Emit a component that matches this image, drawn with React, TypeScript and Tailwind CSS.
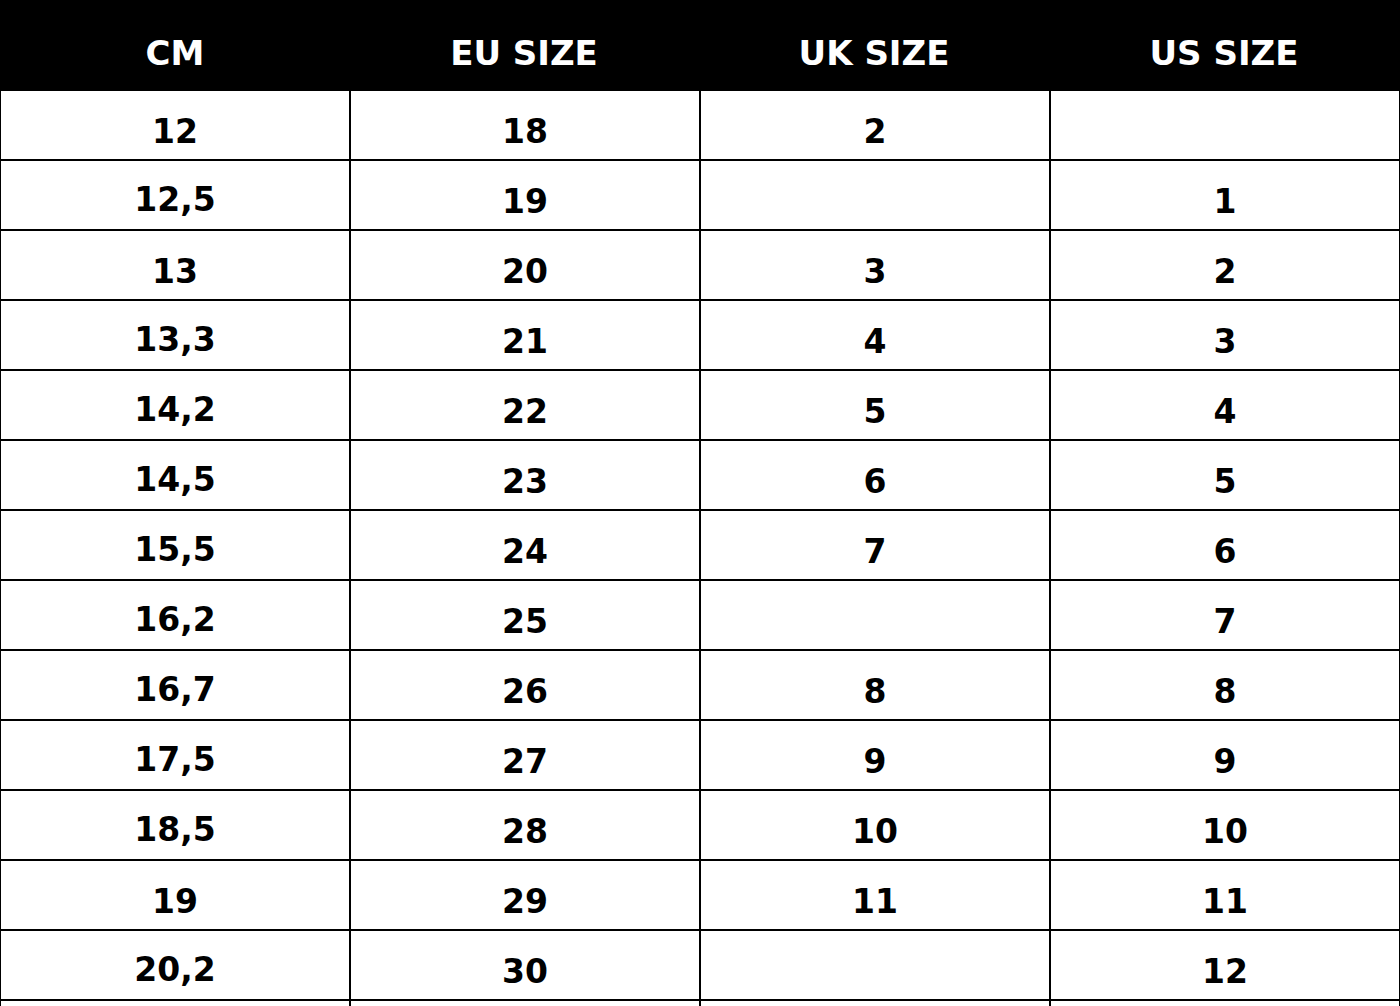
const headers = ["CM", "EU SIZE", "UK SIZE", "US SIZE"];

const rows: string[][] = [
    ["12", "18", "2", ""],
    ["12,5", "19", "", "1"],
    ["13", "20", "3", "2"],
    ["13,3", "21", "4", "3"],
    ["14,2", "22", "5", "4"],
    ["14,5", "23", "6", "5"],
    ["15,5", "24", "7", "6"],
    ["16,2", "25", "", "7"],
    ["16,7", "26", "8", "8"],
    ["17,5", "27", "9", "9"],
    ["18,5", "28", "10", "10"],
    ["19", "29", "11", "11"],
    ["20,2", "30", "", "12"],
    ["", "", "", ""],
];

const cols = "grid grid-cols-[348px_350px_350px_350px]";

const SizeChart = () => {
    return (
        <div className="w-[1400px] h-[1006px] overflow-hidden bg-white border-x border-black font-['DejaVu_Sans',sans-serif] font-bold text-[33px] leading-[38px] text-black">
            <div className={`${cols} h-[91px] bg-black text-white text-[34px]`}>
                {headers.map((h) => (
                    <div key={h} className="pt-[34px] text-center">
                        {h}
                    </div>
                ))}
            </div>
            {rows.map((row, i) => (
                <div key={i} className={`${cols} h-[70px] border-b-2 border-black`}>
                    {row.map((cell, j) => (
                        <div
                            key={j}
                            className={`text-center ${j > 0 ? "border-l-2 border-black" : ""} ${cell.includes(",") ? "pt-[20px]" : "pt-[22px]"}`}
                        >
                            {cell}
                        </div>
                    ))}
                </div>
            ))}
        </div>
    );
};

export default function App() {
    return <SizeChart />;
}
